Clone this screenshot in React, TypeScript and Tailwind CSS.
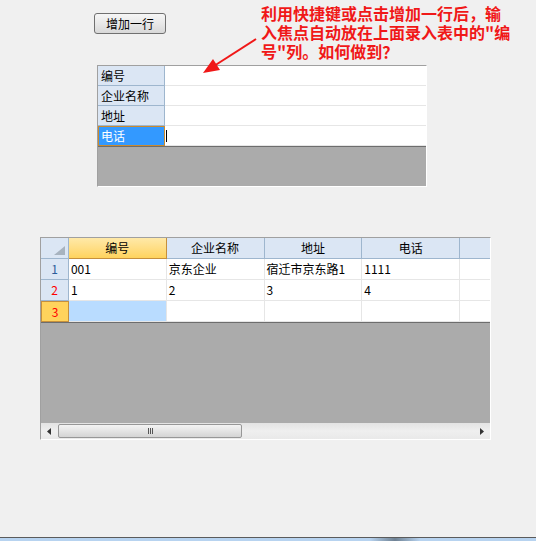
import React from "react";

const cjk = { fontFamily: '"Noto Sans CJK SC", "Liberation Sans", sans-serif' };

function TopGrid() {
  const rows = ["编号", "企业名称", "地址", "电话"];
  return (
    <div className="ml-[97px] flex h-[122px] w-[330px] flex-col border border-[#a0a0a0] border-r-white border-b-white bg-[#ababab]">
      {rows.map((r, i) => {
        const sel = i === 3;
        return (
          <div key={r} className="flex h-[20px]">
            <div
              className={
                sel
                  ? "flex h-[20px] w-[67px] items-center border border-[#c98a2f] bg-[#3399ff] pl-[2px] text-[12px] text-white"
                  : "flex h-[20px] w-[67px] items-center border-r border-b border-[#9eb6ce] bg-[#dbe6f4] pl-[3px] text-[12px] text-black"
              }
            >
              {r}
            </div>
            <div className="relative h-[20px] flex-1 border-b border-[#e6e6e6] bg-white">
              {sel && <div className="absolute left-[1px] top-[4px] h-[12px] w-[1px] bg-black" />}
            </div>
          </div>
        );
      })}
      <div className="h-[1px] bg-[#6d6d6d]" />
    </div>
  );
}

function BottomGrid() {
  const cols = ["编号", "企业名称", "地址", "电话"];
  const data = [
    ["001", "京东企业", "宿迁市京东路1", "1111"],
    ["1", "2", "3", "4"],
    ["", "", "", ""],
  ];
  const rowNumColor = ["text-[#2a5c9a]", "text-[#ff0000]", "text-[#ff0000]"];
  return (
    <div className="ml-[40px] mt-[50px] flex w-[451px] flex-col border border-[#a0a0a0] border-r-white border-b-white bg-[#ababab]">
      <div className="flex h-[21px]">
        <div className="relative h-[21px] w-[28px] border-r border-b border-[#9eb6ce] bg-[#dbe6f4]">
          <svg className="absolute left-[13px] top-[8px]" width="11" height="9" viewBox="0 0 11 9">
            <polygon points="11,0 11,9 0,9" fill="#a7b3bf" />
          </svg>
        </div>
        {cols.map((c, i) => (
          <div
            key={c}
            className={
              i === 0
                ? "flex h-[21px] w-[98px] items-center justify-center border-r border-b border-[#c6903c] bg-gradient-to-b from-[#ffe9a8] to-[#ffd35c] text-[12px] text-black"
                : "flex h-[21px] w-[98px] items-center justify-center border-r border-b border-[#9eb6ce] bg-[#dbe6f4] text-[12px] text-black"
            }
          >
            {c}
          </div>
        ))}
        <div className="h-[21px] w-[30px] border-b border-[#9eb6ce] bg-[#dbe6f4]" />
      </div>
      {data.map((row, ri) => (
        <div key={ri} className="flex h-[21px]">
          <div
            className={
              ri === 2
                ? "flex h-[21px] w-[28px] items-center justify-center border border-[#c6903c] bg-[#ffd35c] text-[12px] text-[#ff0000]"
                : `flex h-[21px] w-[28px] items-center justify-center border-r border-b border-[#9eb6ce] bg-[#dbe6f4] text-[12px] ${rowNumColor[ri]}`
            }
          >
            {ri + 1}
          </div>
          {row.map((v, ci) => (
            <div
              key={ci}
              className={
                ri === 2 && ci === 0
                  ? "flex h-[21px] w-[98px] items-center border-r border-b border-[#e6e6e6] bg-[#b9dcff] pl-[2px] text-[12px] text-black"
                  : "flex h-[21px] w-[98px] items-center border-r border-b border-[#e6e6e6] bg-white pl-[2px] text-[12px] text-black"
              }
            >
              {v}
            </div>
          ))}
          <div className="h-[21px] w-[30px] border-b border-[#e6e6e6] bg-white" />
        </div>
      ))}
      <div className="h-[1px] bg-[#6d6d6d]" />
      <div className="h-[100px]" />
      <div className="flex h-[16px] items-center bg-gradient-to-b from-[#e3e3e3] via-[#efefef] to-[#e9e9e9]">
        <div className="flex h-[16px] w-[17px] items-center justify-center">
          <svg width="5" height="7" viewBox="0 0 5 7">
            <polygon points="4,0 4,7 0,3.5" fill="#333" />
          </svg>
        </div>
        <div className="flex h-[14px] w-[184px] items-center justify-center rounded-[2px] border border-[#979797] bg-gradient-to-b from-[#f3f3f3] via-[#e4e4e4] to-[#d4d4d4]">
          <div className="flex gap-[1px]">
            <div className="h-[6px] w-[1px] bg-[#555]" />
            <div className="h-[6px] w-[1px] bg-[#555]" />
            <div className="h-[6px] w-[1px] bg-[#555]" />
          </div>
        </div>
        <div className="flex-1" />
        <div className="flex h-[16px] w-[17px] items-center justify-center">
          <svg width="5" height="7" viewBox="0 0 5 7">
            <polygon points="1,0 1,7 5,3.5" fill="#333" />
          </svg>
        </div>
      </div>
    </div>
  );
}

export default function App() {
  return (
    <div className="relative flex h-[541px] w-[536px] flex-col overflow-hidden bg-[#f0f0f0]" style={cjk}>
      <div className="flex h-[65px] items-start">
        <button className="ml-[94px] mt-[13px] flex h-[21px] w-[72px] items-center justify-center rounded-[3px] border border-[#707070] bg-gradient-to-b from-[#f6f6f6] via-[#e8e8e8] to-[#d8d8d8] text-[12px] text-black">
          增加一行
        </button>
        <div className="ml-[95px] mt-[4px] flex w-[250px] flex-col text-[16px] font-bold leading-[19px] text-[#f01818]">
          <span className="block h-[19px]">利用快捷键或点击增加一行后，输</span>
          <span className="block h-[19px]">入焦点自动放在上面录入表中的"编</span>
          <span className="block h-[19px]">号"列。如何做到？</span>
        </div>
      </div>
      <TopGrid />
      <BottomGrid />
      <div className="mt-auto flex flex-col">
        <div className="h-[1px] bg-[#5b5b5b]" />
        <div className="relative h-[3px] bg-[#b7d3f0]">
          <div className="absolute left-[370px] top-0 h-[3px] w-[50px] bg-gradient-to-r from-[#b7d3f0] via-[#6f8294] to-[#b7d3f0]" />
        </div>
      </div>
      <svg className="pointer-events-none absolute left-0 top-0" width="536" height="541">
        <line x1="256" y1="39" x2="214" y2="66" stroke="#f01818" strokeWidth="2" />
        <polygon points="203,73 220,70 213,59" fill="#f01818" />
      </svg>
    </div>
  );
}
